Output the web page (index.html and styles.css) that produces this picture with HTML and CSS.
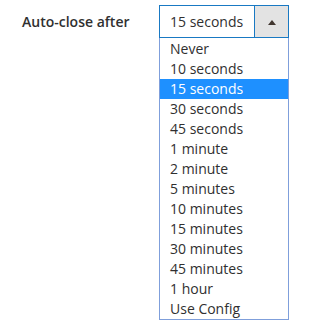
FILE: index.html
```html
<!DOCTYPE html>
<html>
<head>
<meta charset="utf-8">
<link rel="stylesheet" href="styles.css">
</head>
<body>
<div class="field">
  <label class="label">Auto-close after</label>
  <div class="control">
    <div class="select">
      <span class="value">15 seconds</span>
      <span class="arrow"><span class="tri"></span></span>
    </div>
    <ul class="list">
      <li>Never</li>
      <li>10 seconds</li>
      <li class="active">15 seconds</li>
      <li>30 seconds</li>
      <li>45 seconds</li>
      <li>1 minute</li>
      <li>2 minute</li>
      <li>5 minutes</li>
      <li>10 minutes</li>
      <li>15 minutes</li>
      <li>30 minutes</li>
      <li>45 minutes</li>
      <li>1 hour</li>
      <li>Use Config</li>
    </ul>
  </div>
</div>
</body>
</html>
```
FILE: styles.css
```css
html, body {
  margin: 0;
  padding: 0;
  background: #fff;
}
body {
  font-family: "Open Sans", "Liberation Sans", sans-serif;
  font-size: 14px;
  color: #303030;
}
.field {
  display: flex;
  padding: 5px 0 0 22px;
}
.label {
  width: 137px;
  font-weight: 600;
  line-height: 33px;
  color: #303030;
}
.control {
  width: 130px;
  display: flex;
  flex-direction: column;
}
.select {
  height: 33px;
  box-sizing: border-box;
  border: 1px solid #1979c3;
  display: flex;
  background: #fff;
}
.value {
  flex: 1;
  padding-left: 10px;
  line-height: 31px;
  color: #303030;
}
.arrow {
  width: 33px;
  background: #e3e3e3;
  border-left: 1px solid #1979c3;
  display: flex;
  align-items: center;
  justify-content: center;
}
.tri {
  width: 0;
  height: 0;
  border-left: 4px solid transparent;
  border-right: 4px solid transparent;
  border-bottom: 5px solid #41362f;
  margin-top: 1px;
}
.list {
  list-style: none;
  margin: 0;
  padding: 1px 0 0;
  border: 1px solid #7f9fdb;
  border-top: 0;
}
.list li {
  height: 20px;
  line-height: 20px;
  padding-left: 10px;
  color: #303030;
}
.list li.active {
  background: #1e90ff;
  color: #fff;
}
```
